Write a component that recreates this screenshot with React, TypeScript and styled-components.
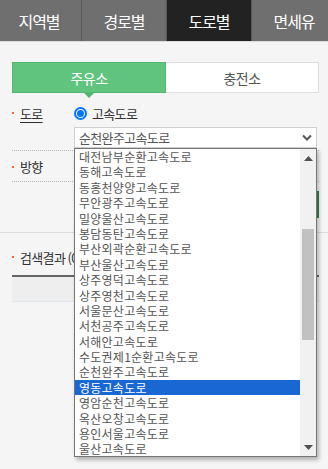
import styled, { createGlobalStyle } from "styled-components"

const GlobalStyle = createGlobalStyle`
  html, body {
    margin: 0;
    padding: 0;
    background: #f5f5f5;
    overflow: hidden;
  }
  body {
    font-family: "Noto Sans CJK KR", "Noto Sans", sans-serif;
    color: #333;
  }
`

const Page = styled.div`
  width: 328px;
  height: 469px;
  overflow: hidden;
  background: #f5f5f5;
`

const TabBar = styled.div`
  display: flex;
  height: 41px;
  margin-left: -3px;
  border-bottom: 1px solid #dcdcdc;
  background: #6f6f6f;
`

const Tab = styled.div<{ active?: boolean }>`
  flex: 0 0 84px;
  display: flex;
  align-items: center;
  justify-content: center;
  border-right: 1px solid #595959;
  background: ${({ active }) => (active ? "#222" : "#6f6f6f")};
  color: #fff;
  font-size: 16px;
  letter-spacing: -1px;
`

const SearchPanel = styled.section`
  padding: 20px 9px 14px 12px;
  border-bottom: 1px solid #dcdcdc;
`

const Toggle = styled.div`
  display: flex;
  height: 31px;
`

const ToggleItem = styled.div<{ active?: boolean }>`
  position: relative;
  flex: 1;
  display: flex;
  align-items: center;
  justify-content: center;
  box-sizing: border-box;
  border: 1px solid ${({ active }) => (active ? "#52b86f" : "#dcdcdc")};
  border-left-width: ${({ active }) => (active ? "1px" : "0")};
  background: ${({ active }) => (active ? "#60c47e" : "#fff")};
  color: ${({ active }) => (active ? "#fff" : "#555")};
  font-size: 14px;
  letter-spacing: -0.6px;

  ${({ active }) =>
    active &&
    `
    &::after {
      content: "";
      position: absolute;
      left: 50%;
      bottom: -6px;
      margin-left: -5px;
      border-left: 5px solid transparent;
      border-right: 5px solid transparent;
      border-top: 5px solid #52b86f;
    }
  `}
`

const Form = styled.div`
  margin-top: 10px;
`

const Row = styled.div<{ pad?: string }>`
  display: flex;
  padding: ${({ pad }) => pad || "0"};
  border-bottom: 1px dotted #b8b8b8;
`

const Label = styled.div<{ underline?: boolean }>`
  flex: 0 0 54px;
  display: flex;
  align-items: center;
  height: 20px;
  padding-left: 8px;
  position: relative;
  font-size: 13px;
  letter-spacing: -0.65px;
  color: #333;
  text-decoration: ${({ underline }) => (underline ? "underline" : "none")};
  text-underline-offset: 3px;

  &::before {
    content: "";
    position: absolute;
    left: 0;
    top: 9px;
    width: 2px;
    height: 2px;
    background: #f26b1d;
  }
`

const Field = styled.div`
  flex: 1;
  display: flex;
  flex-direction: column;
  gap: 4px;
`

const RadioLine = styled.label`
  display: flex;
  align-items: center;
  gap: 5px;
  height: 20px;
  font-size: 13px;
  letter-spacing: -0.65px;
  color: #333;
`

const Radio = styled.span`
  width: 13px;
  height: 13px;
  box-sizing: border-box;
  border-radius: 50%;
  border: 2px solid #0075ff;
  display: flex;
  align-items: center;
  justify-content: center;
  background: #fff;

  &::after {
    content: "";
    width: 7px;
    height: 7px;
    border-radius: 50%;
    background: #0075ff;
  }
`

const SelectWrap = styled.div`
  position: relative;
  width: 243px;
`

const SelectBox = styled.div`
  display: flex;
  align-items: center;
  justify-content: space-between;
  height: 21px;
  box-sizing: border-box;
  padding: 0 4px 0 4px;
  border: 1px solid #d0d0d0;
  background: #fff;
  color: #555;
  font-size: 13px;
  letter-spacing: -0.65px;
`

const ListBox = styled.ul`
  position: absolute;
  top: 100%;
  left: 0;
  z-index: 5;
  display: flex;
  width: 243px;
  height: 309px;
  margin: 0;
  padding: 0;
  box-sizing: border-box;
  border: 1px solid #767676;
  background: #fff;
  box-shadow: 2px 3px 4px rgba(0, 0, 0, 0.28);
  list-style: none;
`

const Options = styled.div`
  flex: 1;
`

const Option = styled.li<{ selected?: boolean }>`
  height: 15.4px;
  line-height: 15.4px;
  padding-left: 4px;
  font-size: 12px;
  letter-spacing: 0.25px;
  white-space: nowrap;
  color: ${({ selected }) => (selected ? "#fff" : "#555")};
  background: ${({ selected }) => (selected ? "#1967d2" : "transparent")};
`

const ScrollTrack = styled.div`
  flex: 0 0 16px;
  display: flex;
  flex-direction: column;
  align-items: center;
  justify-content: space-between;
  background: #f1f1f1;
  padding: 7px 0 6px;
  box-sizing: border-box;
`

const ScrollThumb = styled.div`
  width: 12px;
  height: 111px;
  margin-top: 68px;
  margin-bottom: auto;
  background: #c1c1c1;
`

const DirectionRow = styled(Row)`
  height: 29px;
  align-items: center;
  padding-top: 1px;
`

const ButtonRow = styled.div`
  display: flex;
  justify-content: flex-end;
  margin-top: 9px;
`

const SearchButton = styled.div`
  width: 70px;
  height: 27px;
  background: #3aa35a;
  border-right: 2px solid #2f8f4c;
`

const Results = styled.section`
  padding: 15px 9px 0 12px;
`

const ResultTitle = styled.div`
  display: flex;
  align-items: center;
  height: 18px;
  padding-left: 8px;
  position: relative;
  font-size: 13px;
  letter-spacing: -0.65px;
  color: #333;

  &::before {
    content: "";
    position: absolute;
    left: 0;
    top: 8px;
    width: 2px;
    height: 2px;
    background: #f26b1d;
  }
`

const TableHead = styled.div`
  margin-top: 9px;
  height: 24px;
  border-top: 2px solid #666;
  border-bottom: 1px solid #dfe6ee;
  background: #eeeeee;
`

const roads = [
  "대전남부순환고속도로",
  "동해고속도로",
  "동홍천양양고속도로",
  "무안광주고속도로",
  "밀양울산고속도로",
  "봉담동탄고속도로",
  "부산외곽순환고속도로",
  "부산울산고속도로",
  "상주영덕고속도로",
  "상주영천고속도로",
  "서울문산고속도로",
  "서천공주고속도로",
  "서해안고속도로",
  "수도권제1순환고속도로",
  "순천완주고속도로",
  "영동고속도로",
  "영암순천고속도로",
  "옥산오창고속도로",
  "용인서울고속도로",
  "울산고속도로"
]

function Arrow({ down }: { down?: boolean }) {
  return (
    <svg width="9" height="5" viewBox="0 0 9 5">
      {down ? <polygon points="0,0 9,0 4.5,5" fill="#505050" /> : <polygon points="0,5 9,5 4.5,0" fill="#505050" />}
    </svg>
  )
}

export default function App() {
  return (
    <Page>
      <GlobalStyle />
      <TabBar>
        <Tab>지역별</Tab>
        <Tab>경로별</Tab>
        <Tab active>도로별</Tab>
        <Tab>면세유</Tab>
      </TabBar>

      <SearchPanel>
        <Toggle>
          <ToggleItem active>주유소</ToggleItem>
          <ToggleItem>충전소</ToggleItem>
        </Toggle>

        <Form>
          <Row pad="0 0 2px 0">
            <Label underline>도로</Label>
            <Field>
              <RadioLine>
                <Radio />
                고속도로
              </RadioLine>
              <SelectWrap>
                <SelectBox>
                  순천완주고속도로
                  <svg width="10" height="7" viewBox="0 0 10 7">
                    <polyline points="1,1.5 5,5.5 9,1.5" fill="none" stroke="#555" strokeWidth="2" />
                  </svg>
                </SelectBox>
                <ListBox>
                  <Options>
                    {roads.map((r) => (
                      <Option key={r} selected={r === "영동고속도로"}>
                        {r}
                      </Option>
                    ))}
                  </Options>
                  <ScrollTrack>
                    <Arrow />
                    <ScrollThumb />
                    <Arrow down />
                  </ScrollTrack>
                </ListBox>
              </SelectWrap>
            </Field>
          </Row>

          <DirectionRow>
            <Label>방향</Label>
          </DirectionRow>
        </Form>

        <ButtonRow>
          <SearchButton />
        </ButtonRow>
      </SearchPanel>

      <Results>
        <ResultTitle>검색결과 (0)</ResultTitle>
        <TableHead />
      </Results>
    </Page>
  )
}
